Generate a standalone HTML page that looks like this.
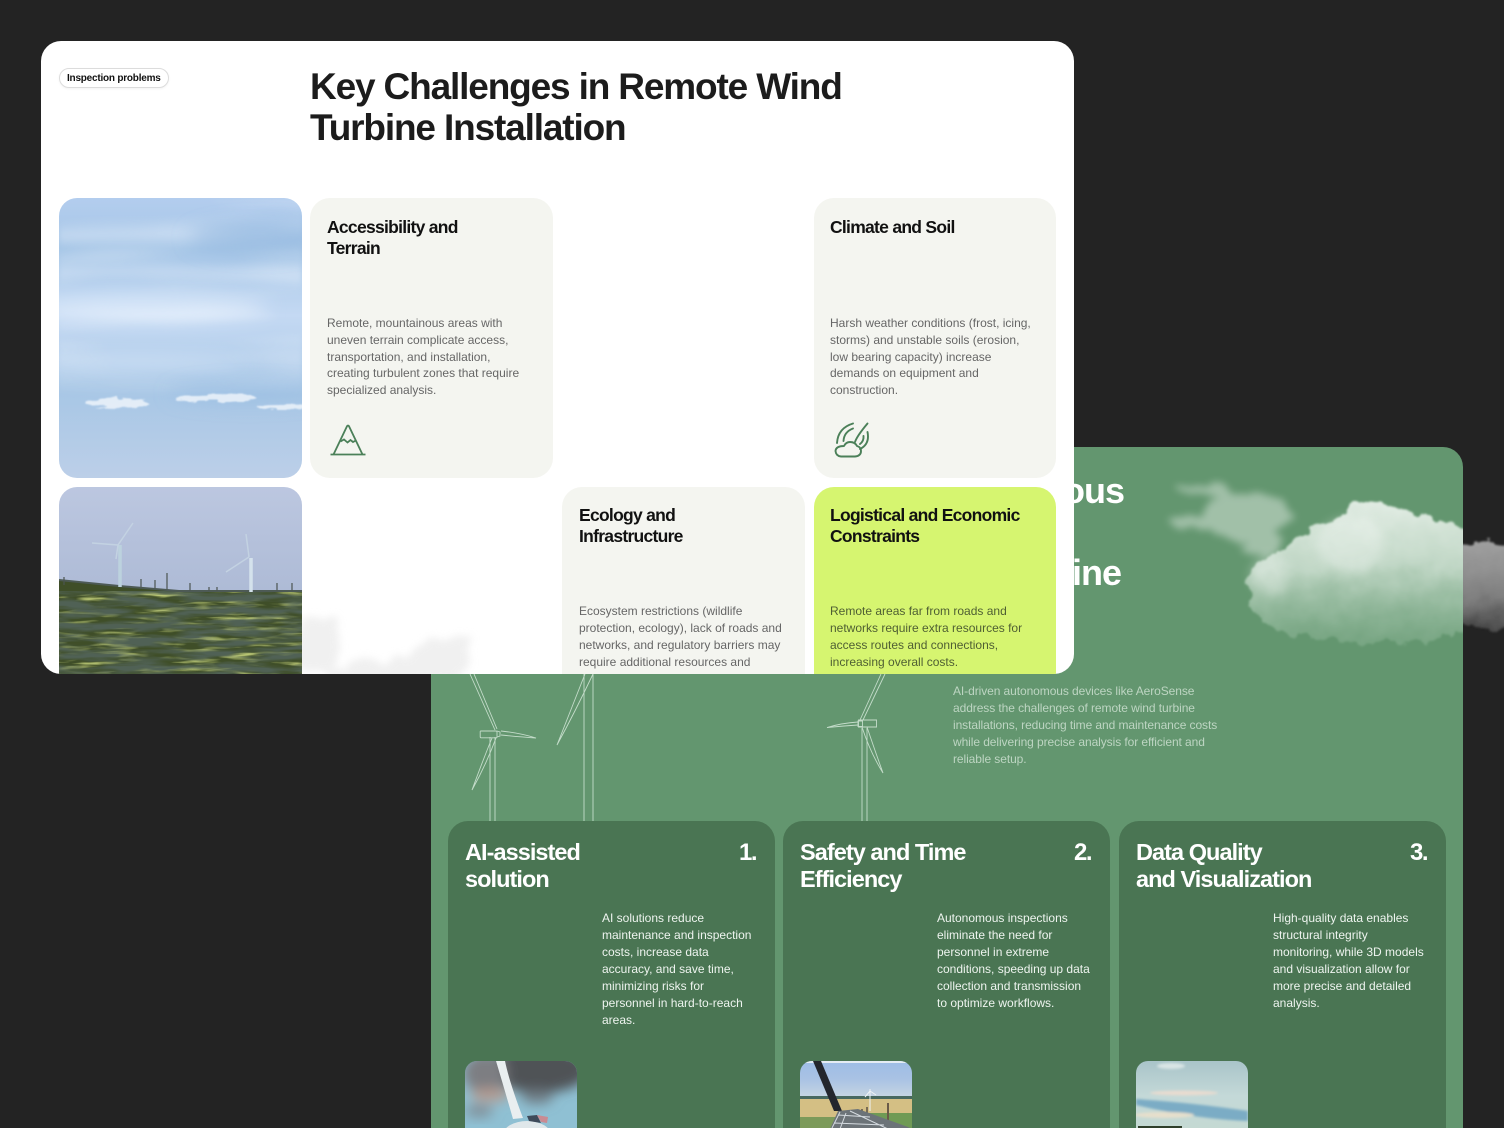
<!DOCTYPE html>
<html><head><meta charset="utf-8"><style>
html,body{margin:0;padding:0;width:1504px;height:1128px;overflow:hidden}
body{background:#232323;font-family:"Liberation Sans",sans-serif}
#root{position:absolute;left:0;top:0;width:1504px;height:1128px;overflow:hidden;background:#232323}
.a{position:absolute}
.l{position:absolute;white-space:nowrap}
.wc{left:41px;top:41px;width:1033px;height:633px;background:#fff;border-radius:20px;overflow:hidden}
.gc{left:431px;top:447px;width:1032px;height:681px;background:#63966f;border-radius:20px 20px 0 0;overflow:hidden}
.card{position:absolute;width:243px;height:280px;background:#f4f5f0;border-radius:20px}
.t{position:absolute;left:17px;top:18px;font-size:17.500px;font-weight:bold;line-height:21px;color:#111;letter-spacing:-.72px;white-space:nowrap}
.b{position:absolute;left:17px;top:116px;font-size:12px;line-height:17px;color:#666;white-space:nowrap}
.r1 .t{top:19px}.r1 .b{top:117px;line-height:16.800px}
.ic{position:absolute;width:327px;height:340px;top:374px;background:#4a7553;border-radius:20px}
.it{position:absolute;left:17px;top:18px;font-size:23.500px;font-weight:bold;line-height:27px;color:#fff;letter-spacing:-.95px;white-space:nowrap}
.n{position:absolute;right:19px;top:18px;font-size:24px;line-height:27px;color:#fff;font-weight:bold;letter-spacing:-1.5px}
.ib{position:absolute;left:154px;top:89px;font-size:12px;line-height:17px;color:#eef4ef;white-space:nowrap}
.th{position:absolute;left:17px;top:240px;width:112px;height:100px;border-radius:12px;overflow:hidden}
</style></head><body><div id="root">
<svg width="0" height="0" style="position:absolute"><defs>
<filter id="cl" x="-20%" y="-20%" width="140%" height="140%"><feTurbulence type="fractalNoise" baseFrequency=".05" numOctaves="4" seed="7"/><feDisplacementMap in="SourceGraphic" scale="20" xChannelSelector="R" yChannelSelector="G"/><feGaussianBlur stdDeviation="1"/></filter>
<filter id="cs" x="-20%" y="-20%" width="140%" height="140%"><feTurbulence type="fractalNoise" baseFrequency=".04" numOctaves="3" seed="3"/><feDisplacementMap in="SourceGraphic" scale="22" xChannelSelector="R" yChannelSelector="G"/><feGaussianBlur stdDeviation="4"/></filter>
<filter id="b6"><feGaussianBlur stdDeviation="6"/></filter>
<filter id="b3" x="-30%" y="-30%" width="160%" height="160%"><feGaussianBlur stdDeviation="5"/></filter>
<filter id="b2"><feGaussianBlur stdDeviation="1.2"/></filter>
<filter id="b10" x="-30%" y="-100%" width="160%" height="300%"><feGaussianBlur stdDeviation="9"/></filter>
<filter id="sc" x="-10%" y="-60%" width="120%" height="220%"><feTurbulence type="fractalNoise" baseFrequency=".05 .2" numOctaves="3" seed="4"/><feDisplacementMap in="SourceGraphic" scale="8" xChannelSelector="R" yChannelSelector="G"/><feGaussianBlur stdDeviation=".9"/></filter>
<filter id="st" x="0" y="0" width="100%" height="100%"><feTurbulence type="fractalNoise" baseFrequency=".005 .035" numOctaves="2" seed="9"/><feColorMatrix values="0 0 0 0 .93  0 0 0 0 .96  0 0 0 0 1  2.2 0 0 0 -.9"/><feGaussianBlur stdDeviation="3"/></filter>
<filter id="gn" x="0" y="0" width="100%" height="100%"><feTurbulence type="fractalNoise" baseFrequency=".02 .14" numOctaves="3" seed="5"/><feColorMatrix values="0 0 0 0 .08  0 0 0 0 .12  0 0 0 0 .09  3 0 0 0 -1"/></filter>
<filter id="gy" x="0" y="0" width="100%" height="100%"><feTurbulence type="fractalNoise" baseFrequency=".025 .2" numOctaves="3" seed="11"/><feColorMatrix values="0 0 0 0 .5  0 0 0 0 .58  0 0 0 0 .18  3.2 0 0 0 -1.55"/></filter>
<linearGradient id="sky" x1="0" y1="0" x2="0" y2="1"><stop offset="0" stop-color="#b3cdee"/><stop offset=".18" stop-color="#a6c6e7"/><stop offset=".42" stop-color="#c4d9f3"/><stop offset=".7" stop-color="#a8c7e6"/><stop offset="1" stop-color="#bccfe8"/></linearGradient>
<linearGradient id="sky2" x1="0" y1="0" x2="0" y2="1"><stop offset="0" stop-color="#bcc7e0"/><stop offset=".55" stop-color="#aebbd6"/><stop offset="1" stop-color="#9db2c6"/></linearGradient>
<linearGradient id="fade" x1="0" y1="0" x2="0" y2="1"><stop offset="0" stop-color="#f0f6f1" stop-opacity=".9"/><stop offset=".45" stop-color="#dfece2" stop-opacity=".75"/><stop offset="1" stop-color="#a5c8ae" stop-opacity=".3"/></linearGradient>
<linearGradient id="gt" x1="0" y1="0" x2="0" y2="1"><stop offset="0" stop-color="#a0a0a0"/><stop offset=".6" stop-color="#808080"/><stop offset="1" stop-color="#484848"/></linearGradient>
<linearGradient id="mf" x1="0" y1="0" x2="0" y2="1"><stop offset="0" stop-color="#fff"/><stop offset=".55" stop-color="#fff"/><stop offset=".72" stop-color="#000"/></linearGradient>
<mask id="mk"><rect width="243" height="280" fill="url(#mf)"/></mask>
</defs></svg>

<svg class="a" style="left:1440px;top:520px" width="64" height="130"><g filter="url(#cl)"><ellipse cx="40" cy="66" rx="70" ry="44" fill="url(#gt)"/></g></svg>

<div class="a gc">
 <div class="l" style="right:339px;top:23px;font-size:36px;font-weight:bold;line-height:41px;color:#fff;letter-spacing:-1px">Autonomous</div>
 <div class="l" style="right:342px;top:105px;font-size:36px;font-weight:bold;line-height:41px;color:#fff;letter-spacing:-1px">Turbine</div>

 <svg class="a" style="left:0;top:0" width="1032" height="374" viewBox="431 447 1032 374">
  <g filter="url(#cs)" opacity=".4" fill="#fff"><ellipse cx="1245" cy="515" rx="46" ry="24"/><ellipse cx="1205" cy="522" rx="36" ry="10"/><ellipse cx="1208" cy="490" rx="30" ry="5"/><ellipse cx="1262" cy="545" rx="20" ry="12"/></g>
  <g filter="url(#cl)"><path d="M1250 590 Q1250 565 1275 553 Q1300 530 1335 522 Q1345 500 1385 503 Q1425 512 1468 535 L1480 630 Q1400 648 1320 640 Q1260 630 1250 600Z" fill="url(#fade)"/></g>
  <g filter="url(#b3)" fill="#fff" opacity=".28"><ellipse cx="1270" cy="575" rx="20" ry="20"/><ellipse cx="1350" cy="545" rx="34" ry="28"/></g>
  <g fill="none" stroke="#c4dcca" stroke-width=".9">
   <path d="M490 821V737M495 821V737"/>
   <path d="M481 731h15q1 0 1 1v5q0 .8-1 .8h-15q-.8 0-.8-1v-5q0-1 .8-.8z"/>
   <path d="M497 731l3 1v4l-3 1"/>
   <path d="M470 674L495 730M474 674L497 729"/>
   <path d="M501 731Q520 733 536 738Q520 737 501 735"/>
   <path d="M496 738Q486 765 472 790Q483 760 492 738"/>
   <path d="M584 821V674M593 821V674"/>
   <path d="M585 674Q570 712 557 745Q575 712 593 674"/>
   <path d="M858.500 720h18v7h-18z"/>
   <path d="M858 721h4.500v5.500h-4.500z"/>
   <path d="M858 722Q842 723 827 727.500Q842 726 858 725"/>
   <path d="M860 720L881 674M863 720L885 674"/>
   <path d="M862 727Q870 752 883 773Q874 748 867 727"/>
   <path d="M862 821V728M867 821V728"/>
  </g>
 </svg>

 <div class="l" style="left:522px;top:236px;font-size:12px;line-height:17px;color:#bdd5c2;letter-spacing:-.08px">AI-driven autonomous devices like AeroSense<br>address the challenges of remote wind turbine<br>installations, reducing time and maintenance costs<br>while delivering precise analysis for efficient and<br>reliable setup.</div>

 <div class="ic" style="left:17px">
  <div class="it">AI-assisted<br>solution</div><div class="n">1.</div>
  <div class="ib">AI solutions reduce<br>maintenance and inspection<br>costs, increase data<br>accuracy, and save time,<br>minimizing risks for<br>personnel in hard-to-reach<br>areas.</div>
  <div class="th"><svg width="112" height="100" viewBox="0 0 112 100">
   <rect width="112" height="100" fill="#8fc0d3"/>
   <g filter="url(#b6)"><ellipse cx="75" cy="8" rx="50" ry="24" fill="#4f5257"/><ellipse cx="20" cy="12" rx="22" ry="20" fill="#7d7e82"/><ellipse cx="25" cy="34" rx="20" ry="7" fill="#b39b92"/><ellipse cx="14" cy="50" rx="14" ry="6" fill="#7f8c95"/><ellipse cx="72" cy="36" rx="16" ry="7" fill="#6f7e86"/></g>
   <path d="M31 0H40Q44 20 58 57L48 58Q40 30 31 0Z" fill="#e9eef0"/><ellipse cx="62" cy="74" rx="24" ry="14" fill="#dfe7ea"/><path d="M62 55L72 54 76 62 64 60Z" fill="#3e4a5a"/><path d="M72 54L83 56 82 62 76 61Z" fill="#c98b93"/>
  </svg></div>
 </div>
 <div class="ic" style="left:352px">
  <div class="it">Safety and Time<br>Efficiency</div><div class="n">2.</div>
  <div class="ib">Autonomous inspections<br>eliminate the need for<br>personnel in extreme<br>conditions, speeding up data<br>collection and transmission<br>to optimize workflows.</div>
  <div class="th"><svg width="112" height="100" viewBox="0 0 112 100">
   <defs><linearGradient id="t2" x1="0" y1="0" x2="0" y2="1"><stop offset="0" stop-color="#9dbde6"/><stop offset=".5" stop-color="#a9c2e4"/><stop offset="1" stop-color="#c5d4e2"/></linearGradient></defs>
   <rect width="112" height="36" fill="url(#t2)"/><rect y="0" width="112" height="2" fill="#e4ecf4"/>
   <rect y="35" width="112" height="4" fill="#47685f"/><rect y="38" width="112" height="30" fill="#d4bf84"/><rect x="60" y="52" width="52" height="16" fill="#6f9a55"/><rect y="56" width="40" height="12" fill="#7c9a5a"/>
   <path d="M13 0H21L42 50H34Z" fill="#23262d"/><path d="M70 28V50M70 30l6 4M70 30l-5 6" stroke="#eef3f6" stroke-width="1" fill="none"/><path d="M88 42V60" stroke="#6a5a48" stroke-width="2"/><path d="M62 48V60M67 46V58" stroke="#5b5045" stroke-width="1.500"/>
   <path d="M30 68L38 50 58 48 108 66 112 68Z" fill="#6c7378"/><path d="M32 67L40 51M40 68L46 52M50 50L88 68M38 54L70 56M34 62L84 64" stroke="#d5dbe0" stroke-width="1" fill="none"/>
  </svg></div>
 </div>
 <div class="ic" style="left:688px">
  <div class="it">Data Quality<br>and Visualization</div><div class="n">3.</div>
  <div class="ib">High-quality data enables<br>structural integrity<br>monitoring, while 3D models<br>and visualization allow for<br>more precise and detailed<br>analysis.</div>
  <div class="th"><svg width="112" height="100" viewBox="0 0 112 100">
   <defs><linearGradient id="t3" x1="0" y1="0" x2="0" y2="1"><stop offset="0" stop-color="#a9c4c9"/><stop offset=".35" stop-color="#c4d9d8"/><stop offset="1" stop-color="#c5d9cd"/></linearGradient></defs>
   <rect width="112" height="100" fill="url(#t3)"/>
   <g filter="url(#b2)"><path d="M0 38Q60 42 112 50V60Q60 58 0 44Z" fill="#6ea5c2" opacity=".85"/><ellipse cx="48" cy="32" rx="34" ry="2.500" fill="#e8dcd0"/><ellipse cx="28" cy="54" rx="30" ry="3" fill="#e6dfcc"/><ellipse cx="35" cy="5" rx="14" ry="3" fill="#d9e5e5"/></g>
   <rect x="2" y="65" width="44" height="4" fill="#2f3f2b"/>
  </svg></div>
 </div>
</div>

<div class="a wc">
 <div class="a" style="left:18px;top:27px;width:108px;height:18px;border:1px solid #dcdcdc;border-radius:11px;box-shadow:0 1px 2px rgba(0,0,0,.05)"></div>
 <div class="l" style="left:26px;top:30px;font-size:10px;font-weight:bold;line-height:15px;color:#111;letter-spacing:-.22px">Inspection problems</div>
 <div class="l" style="left:269px;top:25px;font-size:37px;font-weight:bold;line-height:41px;color:#1c1c1c;letter-spacing:-1.15px">Key Challenges in Remote Wind<br>Turbine Installation</div>

 <svg class="a" style="left:18px;top:157px;border-radius:18px" width="243" height="280" viewBox="0 0 243 280">
  <rect width="243" height="280" fill="url(#sky)"/>
  <g mask="url(#mk)"><rect width="243" height="280" filter="url(#st)" opacity=".45"/></g>
  <g filter="url(#b10)" fill="#eef5ff"><ellipse cx="90" cy="110" rx="120" ry="14" opacity=".5"/><ellipse cx="80" cy="165" rx="110" ry="6" opacity=".5"/></g>
  <g filter="url(#b10)" fill="#8fb6de"><ellipse cx="200" cy="40" rx="70" ry="16" opacity=".5"/><ellipse cx="190" cy="195" rx="80" ry="10" opacity=".4"/></g>
  <g filter="url(#sc)" fill="#eef4fb" opacity=".85"><ellipse cx="58" cy="205" rx="32" ry="5"/><ellipse cx="158" cy="200" rx="40" ry="4"/><ellipse cx="222" cy="209" rx="24" ry="2"/></g>
 </svg>

 <svg class="a" style="left:18px;top:446px;border-radius:18px 18px 0 0" width="243" height="187" viewBox="0 0 243 187">
  <rect width="243" height="187" fill="url(#sky2)"/>
  <path d="M0 93L60 99 120 104 243 104V187H0Z" fill="#3f4e28"/>
  <rect y="104" width="243" height="83" filter="url(#gy)"/>
  <rect y="104" width="243" height="83" filter="url(#gn)"/>
  <path d="M0 93L60 99 120 104 243 104" fill="none" stroke="#4d5a55" stroke-width="2"/>
  <g fill="none">
   <path d="M61 100V58" stroke="#bcd2de" stroke-width="3.500"/><path d="M59 58L74 36M59 58L33 56M59 58L57 72" stroke-width="1.500" stroke="#c3d2e2"/>
   <path d="M192 105V71" stroke="#d4e2ec" stroke-width="3.500"/><path d="M190 70L187 47M190 70L167 85" stroke-width="1.500" stroke="#c3d2e2"/>
  </g>
  <g stroke="#4b5450" stroke-width="1.200"><path d="M5 90v8M82 92v8M108 86v16M96 93v8M131 96v8M233 96v8M218 96v8M150 100v4M158 100v4"/></g>
 </svg>

 <div class="card r1" style="left:269px;top:157px">
  <div class="t">Accessibility and<br>Terrain</div>
  <div class="b">Remote, mountainous areas with<br>uneven terrain complicate access,<br>transportation, and installation,<br>creating turbulent zones that require<br>specialized analysis.</div>
  <svg class="a" style="left:20px;top:226px" width="36" height="32" viewBox="0 0 36 32" fill="none" stroke="#4b8059" stroke-width="1.800"><path d="M0.500 30.500H35.500"/><path d="M3.500 30.500L17 2.200Q18 .9 19 2.200L32.500 30.500"/><path d="M10.500 17.500L14 15.500 17.500 18.500 20.500 16 23 18 25.800 16.500"/></svg>
 </div>
 <div class="card r1" style="left:773px;top:157px;width:242px">
  <div class="t" style="left:16px">Climate and Soil</div>
  <div class="b" style="left:16px">Harsh weather conditions (frost, icing,<br>storms) and unstable soils (erosion,<br>low bearing capacity) increase<br>demands on equipment and<br>construction.</div>
  <svg class="a" style="left:20px;top:224px" width="36" height="37" viewBox="834 422 36 37" fill="none" stroke="#4b8059" stroke-width="1.900" stroke-linecap="round" stroke-linejoin="round"><path d="M841 456.500H855Q861 456 861 451Q861 447 857 446Q855 442 850 442Q846 442 844 446Q836 446 835.500 451Q836 456 841 456.500Z"/><path d="M837 443Q838 428 853 423.500"/><path d="M843.500 441Q844 432 853 428.500"/><path d="M855 442Q857 436 867.500 423.500"/><path d="M860 449Q870 444 867.500 432"/><path d="M860 444Q864 441 863.500 436"/></svg>
 </div>
 <div class="card" style="left:521px;top:446px">
  <div class="t">Ecology and<br>Infrastructure</div>
  <div class="b">Ecosystem restrictions (wildlife<br>protection, ecology), lack of roads and<br>networks, and regulatory barriers may<br>require additional resources and</div>
 </div>
 <div class="card" style="left:773px;top:446px;width:242px;background:#d6f570">
  <div class="t" style="left:16px">Logistical and Economic<br>Constraints</div>
  <div class="b" style="left:16px;color:#4f5f33">Remote areas far from roads and<br>networks require extra resources for<br>access routes and connections,<br>increasing overall costs.</div>
 </div>
 <svg class="a" style="left:261px;top:555px" width="180" height="78" viewBox="0 0 180 78"><g filter="url(#cs)" fill="#e4e4e4" opacity=".55"><ellipse cx="15" cy="50" rx="24" ry="30"/><ellipse cx="140" cy="62" rx="32" ry="22"/><ellipse cx="85" cy="78" rx="60" ry="14"/></g></svg>
</div>
</div></body></html>
